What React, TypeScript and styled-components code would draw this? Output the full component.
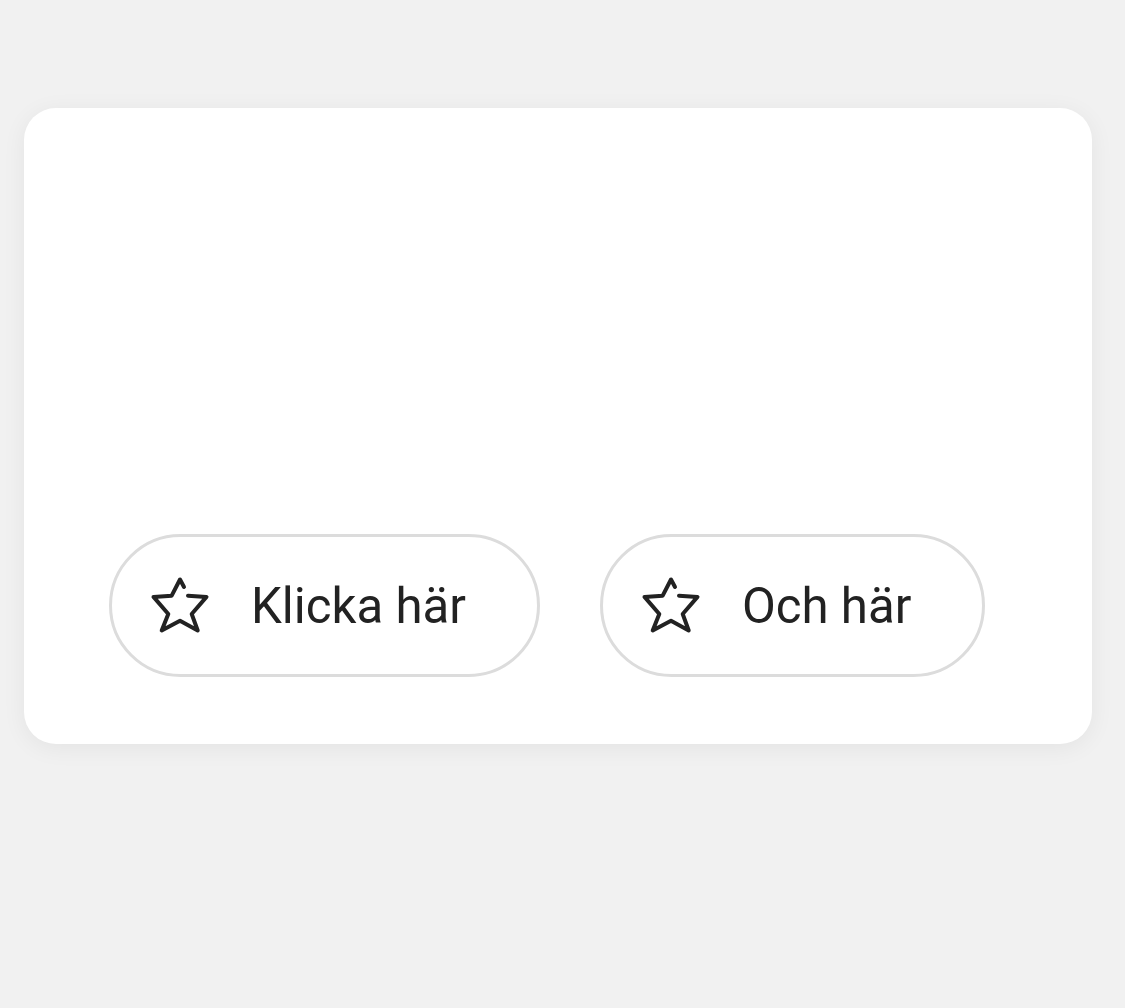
import * as React from 'react'
import styled, { createGlobalStyle } from 'styled-components'

const GlobalStyle = createGlobalStyle`
	html, body {
		margin: 0;
		padding: 0;
		background: #f1f1f1;
		font-family: Roboto, "Noto Sans", sans-serif;
	}
`

const Page = styled.div`
	padding: 108px 33px 0 24px;
	min-height: 1008px;
	box-sizing: border-box;
`

const Card = styled.div`
	height: 636px;
	box-sizing: border-box;
	background: #ffffff;
	border-radius: 32px;
	box-shadow: 0 4px 24px rgba(0, 0, 0, 0.06);
	display: flex;
	flex-direction: column;
	justify-content: flex-end;
	padding: 0 85px 67px;
`

const ButtonRow = styled.div`
	display: flex;
	gap: 60px;
`

const PillButton = styled.button`
	display: flex;
	align-items: center;
	gap: 41px;
	height: 143px;
	box-sizing: border-box;
	padding: 0 71px 0 38px;
	border: 3px solid #dcdcdc;
	border-radius: 72px;
	background: #ffffff;
	color: #222222;
	font-family: Roboto, "Noto Sans", sans-serif;
	font-size: 49.2px;
	font-weight: 400;
	cursor: pointer;
`

const StarIcon = () => (
	<svg width="60" height="60" viewBox="0 0 60 60" fill="none">
		<path
			d="M34 11 L30 3.5 L21.7 19.7 L3.5 20.9 L18.3 38 L11.7 54.5 L30 44.7 L47.7 54.5 L41.7 38 L56.5 20.9 L38 19.7"
			stroke="#222222"
			strokeWidth="4"
			strokeLinecap="round"
			strokeLinejoin="round"
		/>
	</svg>
)

export default function App() {
	return (
		<Page>
			<GlobalStyle />
			<Card>
				<ButtonRow>
					<PillButton>
						<StarIcon />
						Klicka här
					</PillButton>
					<PillButton>
						<StarIcon />
						Och här
					</PillButton>
				</ButtonRow>
			</Card>
		</Page>
	)
}
